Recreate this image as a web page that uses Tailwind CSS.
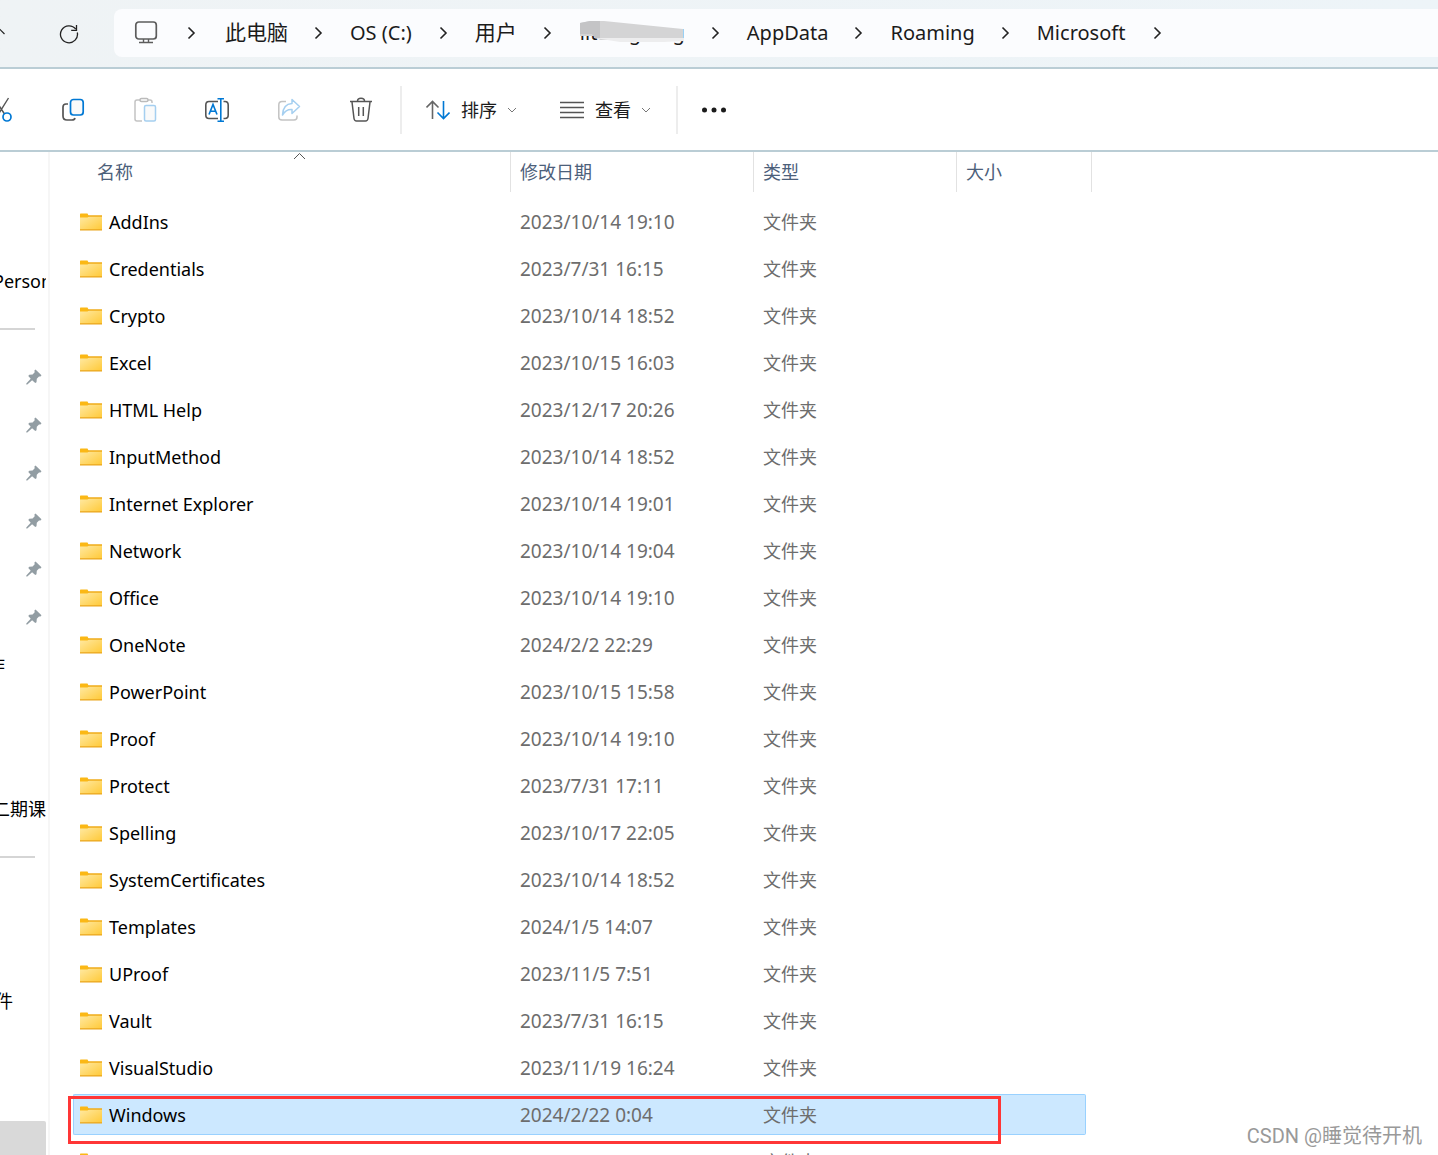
<!DOCTYPE html>
<html lang="zh-CN">
<head>
<meta charset="utf-8">
<title>Microsoft</title>
<script src="https://cdn.jsdelivr.net/npm/@tailwindcss/browser@4"></script>
</head>
<body class="relative flex h-screen flex-col overflow-hidden bg-white font-['Noto_Sans','Noto_Sans_CJK_SC',sans-serif] text-black">

<svg class="absolute" width="0" height="0" aria-hidden="true">
  <defs>
    <linearGradient id="folderFill" x1="0" y1="0" x2="1" y2="1"><stop offset="0" stop-color="#ffe9a2"/><stop offset="1" stop-color="#ffc937"/></linearGradient>
    <symbol id="folder" viewBox="0 0 22 18">
      <path d="M0 1.500Q0 .5 .6 .5H7.500L8.500 2.500H22V6H0Z" fill="#fbb815"/>
      <path d="M0 4.500H7.500L8.800 3.500H22V17H0Z" fill="url(#folderFill)"/>
      <path d="M8 2.500H22V3.500H8ZM0 16.300H22V17.400H0Z" fill="#eaa51c"/>
    </symbol>
    <symbol id="chev" viewBox="0 0 14 14"><path d="M4.500 1.500 10 7 4.500 12.500" fill="none" stroke="#222" stroke-width="1.600"/></symbol>
    <symbol id="down" viewBox="0 0 10 10"><path d="M1 3 5 7 9 3" fill="none" stroke="#777" stroke-width="1"/></symbol>
    <symbol id="pin" viewBox="0 0 16 16"><path d="M9.500 .5 15.500 6.200 14.500 7.500 13 7.400 10.800 9.800 10.500 13.200 9.300 14 6.100 11.200 1.300 15.600 .3 15.500 .3 14.600 4.700 9.800 2.300 7 3.200 5.700 6.600 5.600 8.700 3.300 8.400 1.500Z" fill="#929da3"/></symbol>
  </defs>
</svg>

<header class="flex h-[69px] shrink-0 items-center border-b-2 border-[#bacdd5] bg-linear-to-r from-[#eff3f5] to-[#edf4f8]">
  <button aria-label="上移" class="w-[6px] shrink-0"><svg width="6" height="12" viewBox="0 0 6 12"><path d="M-3 2.500H-2L4.500 9" transform="translate(0 -3)" fill="none" stroke="#222" stroke-width="1.200"/></svg></button>
  <button aria-label="刷新" class="ml-[53px] w-[20px] shrink-0"><svg width="20" height="20" viewBox="0 0 20 20" fill="none" stroke="#222" stroke-width="1.300"><path d="M18.300 8.500A8.500 8.500 0 1 1 16.800 5.200"/><path d="M17.500 1V6.300H12.200"/></svg></button>
  <nav aria-label="路径" class="mb-px ml-[35px] flex h-12 flex-1 items-center rounded-l-lg bg-[#fbfcfe] pl-[20px] text-[20px] whitespace-nowrap text-[#1b1b1b]">
    <svg class="shrink-0" width="24" height="24" viewBox="0 0 24 24" fill="none" stroke="#5c5c5c"><rect x="1.800" y="1" width="20.500" height="17" rx="3" stroke-width="1.700"/><path d="M9.500 18V21M14.500 18V21M5 21.500H19" stroke-width="1.400"/></svg>
    <svg class="mr-[27px] ml-[26px] shrink-0" width="14" height="14"><use href="#chev"/></svg>
    <a href="#" class="text-[21px]">此电脑</a>
    <svg class="mr-[25px] ml-[23px] shrink-0" width="14" height="14"><use href="#chev"/></svg>
    <a href="#">OS (C:)</a>
    <svg class="mr-[25px] ml-6 shrink-0" width="14" height="14"><use href="#chev"/></svg>
    <a href="#" class="text-[21px]">用户</a>
    <svg class="mr-[26px] ml-[23px] shrink-0" width="14" height="14"><use href="#chev"/></svg>
    <a href="#" class="relative flex w-[105px] justify-between"><span>lit</span><span>g</span><span>g</span>
      <svg class="absolute inset-0" width="106" height="28" viewBox="0 0 106 28"><path d="M0 5 10 3H24L103 11V21H76L62 22 20 22 14 18H0Z" fill="#d4d4d5"/><path d="M0 5 10 3H20V20H15L12 16H0Z" fill="#c4c4c6"/><path d="M15 20H104V23L84 24 40 24Z" fill="#ededee"/></svg>
    </a>
    <svg class="mr-[25px] ml-[23px] shrink-0" width="14" height="14"><use href="#chev"/></svg>
    <a href="#">AppData</a>
    <svg class="mr-[25px] ml-[23px] shrink-0" width="14" height="14"><use href="#chev"/></svg>
    <a href="#">Roaming</a>
    <svg class="mr-[25px] ml-[23px] shrink-0" width="14" height="14"><use href="#chev"/></svg>
    <a href="#">Microsoft</a>
    <svg class="ml-[25px] shrink-0" width="14" height="14"><use href="#chev"/></svg>
  </nav>
</header>

<div role="toolbar" class="flex h-[83px] shrink-0 items-center border-b-2 border-[#bacdd5] text-[18px] text-[#1b1b1b]">
  <button aria-label="剪切" class="-ml-[35px] flex w-[72px] shrink-0 justify-center"><svg width="24" height="26" viewBox="0 0 24 26" fill="none"><path d="M19.500 1 9.500 17M5 1 15.500 17" stroke="#555" stroke-width="1.400"/><circle cx="18" cy="20" r="4" stroke="#0078d4" stroke-width="1.700"/><circle cx="6" cy="20" r="4" stroke="#0078d4" stroke-width="1.700"/></svg></button>
  <button aria-label="复制" class="flex w-[72px] shrink-0 justify-center"><svg width="24" height="24" viewBox="0 0 24 24" fill="none" stroke-width="1.700"><path d="M7 6H5Q2 6 2 9V18Q2 22 6 22H11Q13.500 22 14 20" stroke="#555"/><rect x="9.500" y="1.500" width="12.700" height="15.500" rx="3" fill="#fafafa" stroke="#0078d4"/></svg></button>
  <button aria-label="粘贴" disabled class="flex w-[72px] shrink-0 justify-center"><svg width="24" height="26" viewBox="0 0 24 26" fill="none" stroke-width="1.500"><path d="M7 3H4Q2 3 2 5V22Q2 24 4 24H9M15 3H17Q19 3 19 5V6" stroke="#c3c3c3"/><rect x="7" y="1.500" width="8" height="3" rx="1.500" stroke="#bbb"/><rect x="11.500" y="8.500" width="11" height="15.500" rx="1.500" fill="#fafafa" stroke="#a5cff0"/></svg></button>
  <button aria-label="重命名" class="flex w-[72px] shrink-0 justify-center"><svg width="26" height="26" viewBox="0 0 26 26" fill="none" stroke-width="1.600"><path d="M14 4.500H5Q1.800 4.500 1.800 8V18Q1.800 21.500 5 21.500H14M19.500 4.500H21Q24.200 4.500 24.200 8V18Q24.200 21.500 21 21.500H19.500" stroke="#555"/><path d="M5 17.500 9 7.500 13 17.500M6.300 14.300H11.700M13.500 1.800H20M13.500 24.200H20M16.800 1.800V24.200" stroke="#0078d4"/></svg></button>
  <button aria-label="共享" disabled class="flex w-[72px] shrink-0 justify-center"><svg width="24" height="24" viewBox="0 0 24 24" fill="none" stroke-width="1.500" stroke-linejoin="round"><path d="M9 3.500H5Q1.800 3.500 1.800 7V19Q1.800 22 5 22H17Q20 22 20 19V17.500" stroke="#c3c3c3"/><path d="M15 1.500 22.500 8.500 15 15.500V11.500Q9 11 5.500 17 6 6 15 5.500Z" stroke="#a5cff0"/></svg></button>
  <button aria-label="删除" class="flex w-[72px] shrink-0 justify-center"><svg width="24" height="26" viewBox="0 0 24 26" fill="none" stroke="#555" stroke-width="1.500"><path d="M1 4.500H23M8.500 4Q8.500 1.200 12 1.200T15.500 4M3 5 5 21.500Q5.400 24 7.500 24H16.500Q18.600 24 19 21.500L21 5M9.700 10V19M14.300 10V19"/></svg></button>
  <div class="ml-[3px] h-12 w-[2px] shrink-0 bg-[#ededed]"></div>
  <button class="ml-6 flex shrink-0 items-center"><svg width="24" height="20" viewBox="0 0 24 20" fill="none" stroke-width="1.600"><path d="M6.500 19V1.500M.5 7.500 6.500 1.500 12.500 7.500" stroke="#666"/><path d="M17.500 1V18.500M11.500 12.500 17.500 18.500 23.500 12.500" stroke="#0078d4"/></svg><span class="ml-[11px] pt-[2px]">排序</span><svg class="ml-[10px]" width="10" height="10"><use href="#down"/></svg></button>
  <button class="ml-[43px] flex shrink-0 items-center"><svg width="24" height="18" viewBox="0 0 24 18"><path d="M0 1.500H24M0 6.500H24M0 11.500H24M0 16.500H24" stroke="#555" stroke-width="1.300"/></svg><span class="ml-[11px] pt-[2px]">查看</span><svg class="ml-[10px]" width="10" height="10"><use href="#down"/></svg></button>
  <div class="ml-[25px] h-12 w-[2px] shrink-0 bg-[#ededed]"></div>
  <button aria-label="更多" class="ml-6 shrink-0"><svg width="24" height="6" viewBox="0 0 24 6" fill="#1b1b1b"><circle cx="2.500" cy="3" r="2.500"/><circle cx="12" cy="3" r="2.500"/><circle cx="21.500" cy="3" r="2.500"/></svg></button>
</div>

<div class="flex min-h-0 flex-1">
  <aside class="w-[50px] shrink-0 overflow-hidden border-r-2 border-[#f6f6f6] pt-[105px] text-[18px] whitespace-nowrap">
    <div class="w-[46px]">
      <div class="flex h-12 items-center overflow-hidden"><span class="-ml-[7px]">Personal</span></div>
      <div class="flex h-12 items-center"><hr class="w-[35px] border-t-2 border-[#d5d5d5]"></div>
      <div id="pins"></div>
      <div class="flex h-12 items-center justify-end overflow-hidden pr-[41px]"><span>作</span></div>
      <div class="h-24"></div>
      <div class="flex h-12 items-center justify-end overflow-hidden"><span>二期课</span></div>
      <div class="flex h-12 items-center"><hr class="w-[35px] border-t-2 border-[#d5d5d5]"></div>
      <div class="h-24"></div>
      <div class="flex h-12 items-center justify-end overflow-hidden pr-[33px]"><span>件</span></div>
      <div class="h-24"></div>
      <div class="h-12 rounded-r-xs bg-[#d9d9d9]"></div>
    </div>
  </aside>

  <main class="min-w-0 flex-1 overflow-hidden pl-[23px]">
    <table class="w-[1019px] table-fixed text-left text-[18px]">
      <colgroup><col class="w-[438px]"><col class="w-[243px]"><col class="w-[203px]"><col class="w-[135px]"></colgroup>
      <thead class="text-[#4c607a]">
        <tr class="h-[46px] align-top">
          <th class="relative font-normal"><div class="flex h-10 items-center border-r border-[#e2e2e2] pl-6">名称</div><svg class="absolute top-0 left-[220px]" width="13" height="8" viewBox="0 0 13 8"><path d="M1 7 6.500 1.500 12 7" fill="none" stroke="#555" stroke-width="1"/></svg></th>
          <th class="font-normal"><div class="flex h-10 items-center border-r border-[#e2e2e2] pl-[9px]">修改日期</div></th>
          <th class="font-normal"><div class="flex h-10 items-center border-r border-[#e2e2e2] pl-[9px]">类型</div></th>
          <th class="font-normal"><div class="flex h-10 items-center border-r border-[#e2e2e2] pl-[9px]">大小</div></th>
        </tr>
      </thead>
      <tbody id="files"></tbody>
    </table>
  </main>
</div>

<div class="absolute right-4 bottom-1 font-[Roboto,'Noto_Sans_CJK_SC',sans-serif] text-[20px] leading-[30px] text-[#999999] [text-shadow:1px_1px_0_#ffffff]">CSDN @睡觉待开机</div>

<script>
  const files = [
    ['AddIns', '2023/10/14 19:10'], ['Credentials', '2023/7/31 16:15'], ['Crypto', '2023/10/14 18:52'],
    ['Excel', '2023/10/15 16:03'], ['HTML Help', '2023/12/17 20:26'], ['InputMethod', '2023/10/14 18:52'],
    ['Internet Explorer', '2023/10/14 19:01'], ['Network', '2023/10/14 19:04'], ['Office', '2023/10/14 19:10'],
    ['OneNote', '2024/2/2 22:29'], ['PowerPoint', '2023/10/15 15:58'], ['Proof', '2023/10/14 19:10'],
    ['Protect', '2023/7/31 17:11'], ['Spelling', '2023/10/17 22:05'], ['SystemCertificates', '2023/10/14 18:52'],
    ['Templates', '2024/1/5 14:07'], ['UProof', '2023/11/5 7:51'], ['Vault', '2023/7/31 16:15'],
    ['VisualStudio', '2023/11/19 16:24'], ['Windows', '2024/2/22 0:04'], ['', '']
  ];
  document.getElementById('files').innerHTML = files.map(([name, date]) => {
    const on = name === 'Windows';
    const cell = 'flex h-[41px] items-center ' + (on ? 'border-y border-[#99d1ff] bg-[#cce8ff] ' : 'border-y border-transparent ');
    const mark = on ? '<div class="pointer-events-none absolute top-[5px] -left-[5px] h-[48px] w-[933px] border-3 border-[#ff3636]"></div>' : '';
    return `<tr class="relative h-[47px]">
      <td><div class="${cell} rounded-l-xs border-l pl-[6px]"><svg class="mr-[7px] shrink-0" width="22" height="18"><use href="#folder"/></svg><span class="pt-[2px]">${name}</span></div>${mark}</td>
      <td><div class="${cell} pt-[2px] pl-[9px] text-[19px] text-[#6d6d6d]">${date}</div></td>
      <td><div class="${cell} pt-[2px] pl-[9px] text-[#6d6d6d]">文件夹</div></td>
      <td><div class="${cell} mr-[6px] rounded-r-xs border-r"></div></td></tr>`;
  }).join('');
  document.getElementById('pins').innerHTML =
    '<div class="flex h-12 items-center justify-end pr-[4px]"><svg width="16" height="16"><use href="#pin"/></svg></div>'.repeat(6);
</script>
</body>
</html>
